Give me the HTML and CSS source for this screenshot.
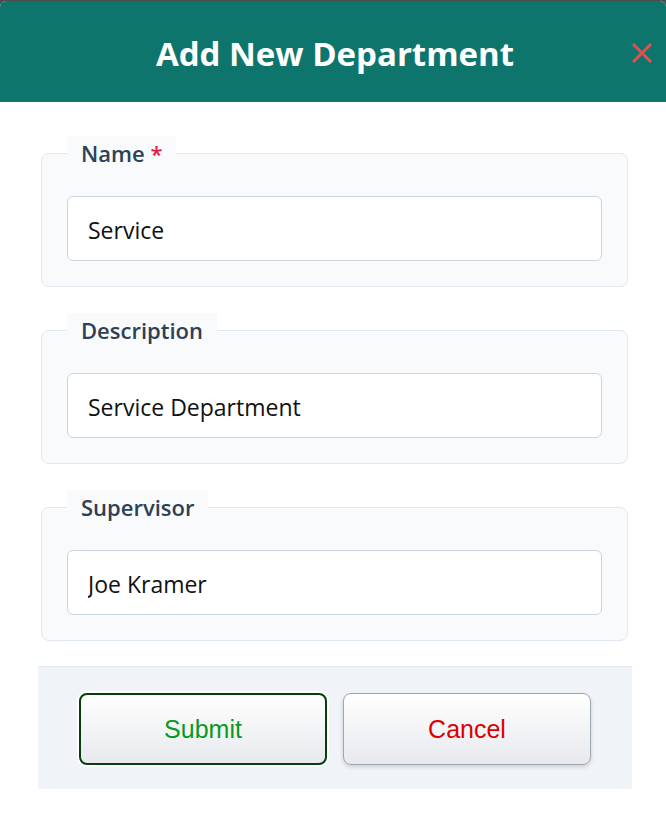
FILE: index.html
```html
<!DOCTYPE html>
<html lang="en">
<head>
<meta charset="utf-8">
<title>Add New Department</title>
<link rel="stylesheet" href="styles.css">
</head>
<body>
<div class="modal">
  <header class="modal-header">
    <h1 class="modal-title">Add New Department</h1>
    <button class="close-btn" type="button" aria-label="Close">
      <svg width="20" height="20" viewBox="0 0 20 20"><path d="M2 2 L18 18 M18 2 L2 18" stroke="#d9534f" stroke-width="3" stroke-linecap="square"/></svg>
    </button>
  </header>
  <form class="modal-body">
    <fieldset class="field">
      <legend class="field-label">Name <span class="req">*</span></legend>
      <input class="field-input" type="text" value="Service">
    </fieldset>
    <fieldset class="field">
      <legend class="field-label">Description</legend>
      <input class="field-input" type="text" value="Service Department">
    </fieldset>
    <fieldset class="field">
      <legend class="field-label">Supervisor</legend>
      <input class="field-input" type="text" value="Joe Kramer">
    </fieldset>
    <div class="modal-footer">
      <button class="btn btn-submit" type="button">Submit</button>
      <button class="btn btn-cancel" type="button">Cancel</button>
    </div>
  </form>
</div>
</body>
</html>
```
FILE: styles.css
```css
html, body {
  margin: 0;
  padding: 0;
}
body {
  background: #4d4d4d;
  font-family: "Open Sans", "Noto Sans", sans-serif;
}
.modal {
  margin-top: 1px;
  min-height: 813px;
  background: #ffffff;
  border-radius: 6px 6px 0 0;
  overflow: hidden;
}
.modal-header {
  height: 101px;
  background: #0e756d;
  display: flex;
  align-items: center;
  justify-content: center;
  position: relative;
}
.modal-title {
  margin: 4px 0 0 4px;
  color: #ffffff;
  font-size: 33px;
  font-weight: 700;
  letter-spacing: 0;
}
.close-btn {
  position: absolute;
  right: 14px;
  top: 42px;
  width: 20px;
  height: 20px;
  padding: 0;
  border: 0;
  background: transparent;
  display: flex;
}
.modal-body {
  padding: 34px 34px 0 38px;
  display: flex;
  flex-direction: column;
}
.field {
  margin: 0 4px 26px 3px;
  padding: 0 25px 25px 25px;
  border: 1px solid #e2e8f0;
  border-radius: 8px;
  background: #f8fafc;
  min-width: 0;
}
.field-label {
  padding: 1px 14px 0;
  line-height: 33px;
  font-size: 22px;
  font-weight: 600;
  color: #2f3f55;
  background: #f8fafc;
}
.req {
  color: #e11d48;
}
.field-input {
  display: block;
  box-sizing: border-box;
  width: 100%;
  height: 65px;
  margin-top: 26px;
  padding: 3px 20px 0;
  border: 1px solid #cbd5e1;
  border-radius: 6px;
  background: #ffffff;
  font-family: "Open Sans", "Noto Sans", sans-serif;
  font-size: 23px;
  color: #111111;
}
.modal-footer {
  margin-top: -1px;
  border-top: 1px solid #e2e8f0;
  background: #f0f3f7;
  padding: 26px 0 24px;
  display: flex;
  justify-content: center;
  gap: 16px;
}
.btn {
  width: 248px;
  height: 72px;
  border-radius: 8px;
  background: linear-gradient(#ffffff, #e7e9ed);
  font-family: "Liberation Sans", Arial, sans-serif;
  font-size: 25px;
  cursor: pointer;
}
.btn-submit {
  border: 2px solid #063f0c;
  color: #079a22;
  box-shadow: 0 0 0 2px #ffffff;
}
.btn-cancel {
  border: 1px solid #9ea6b1;
  color: #dc0000;
  box-shadow: 0 2px 4px rgba(0, 0, 0, 0.15);
}
```
